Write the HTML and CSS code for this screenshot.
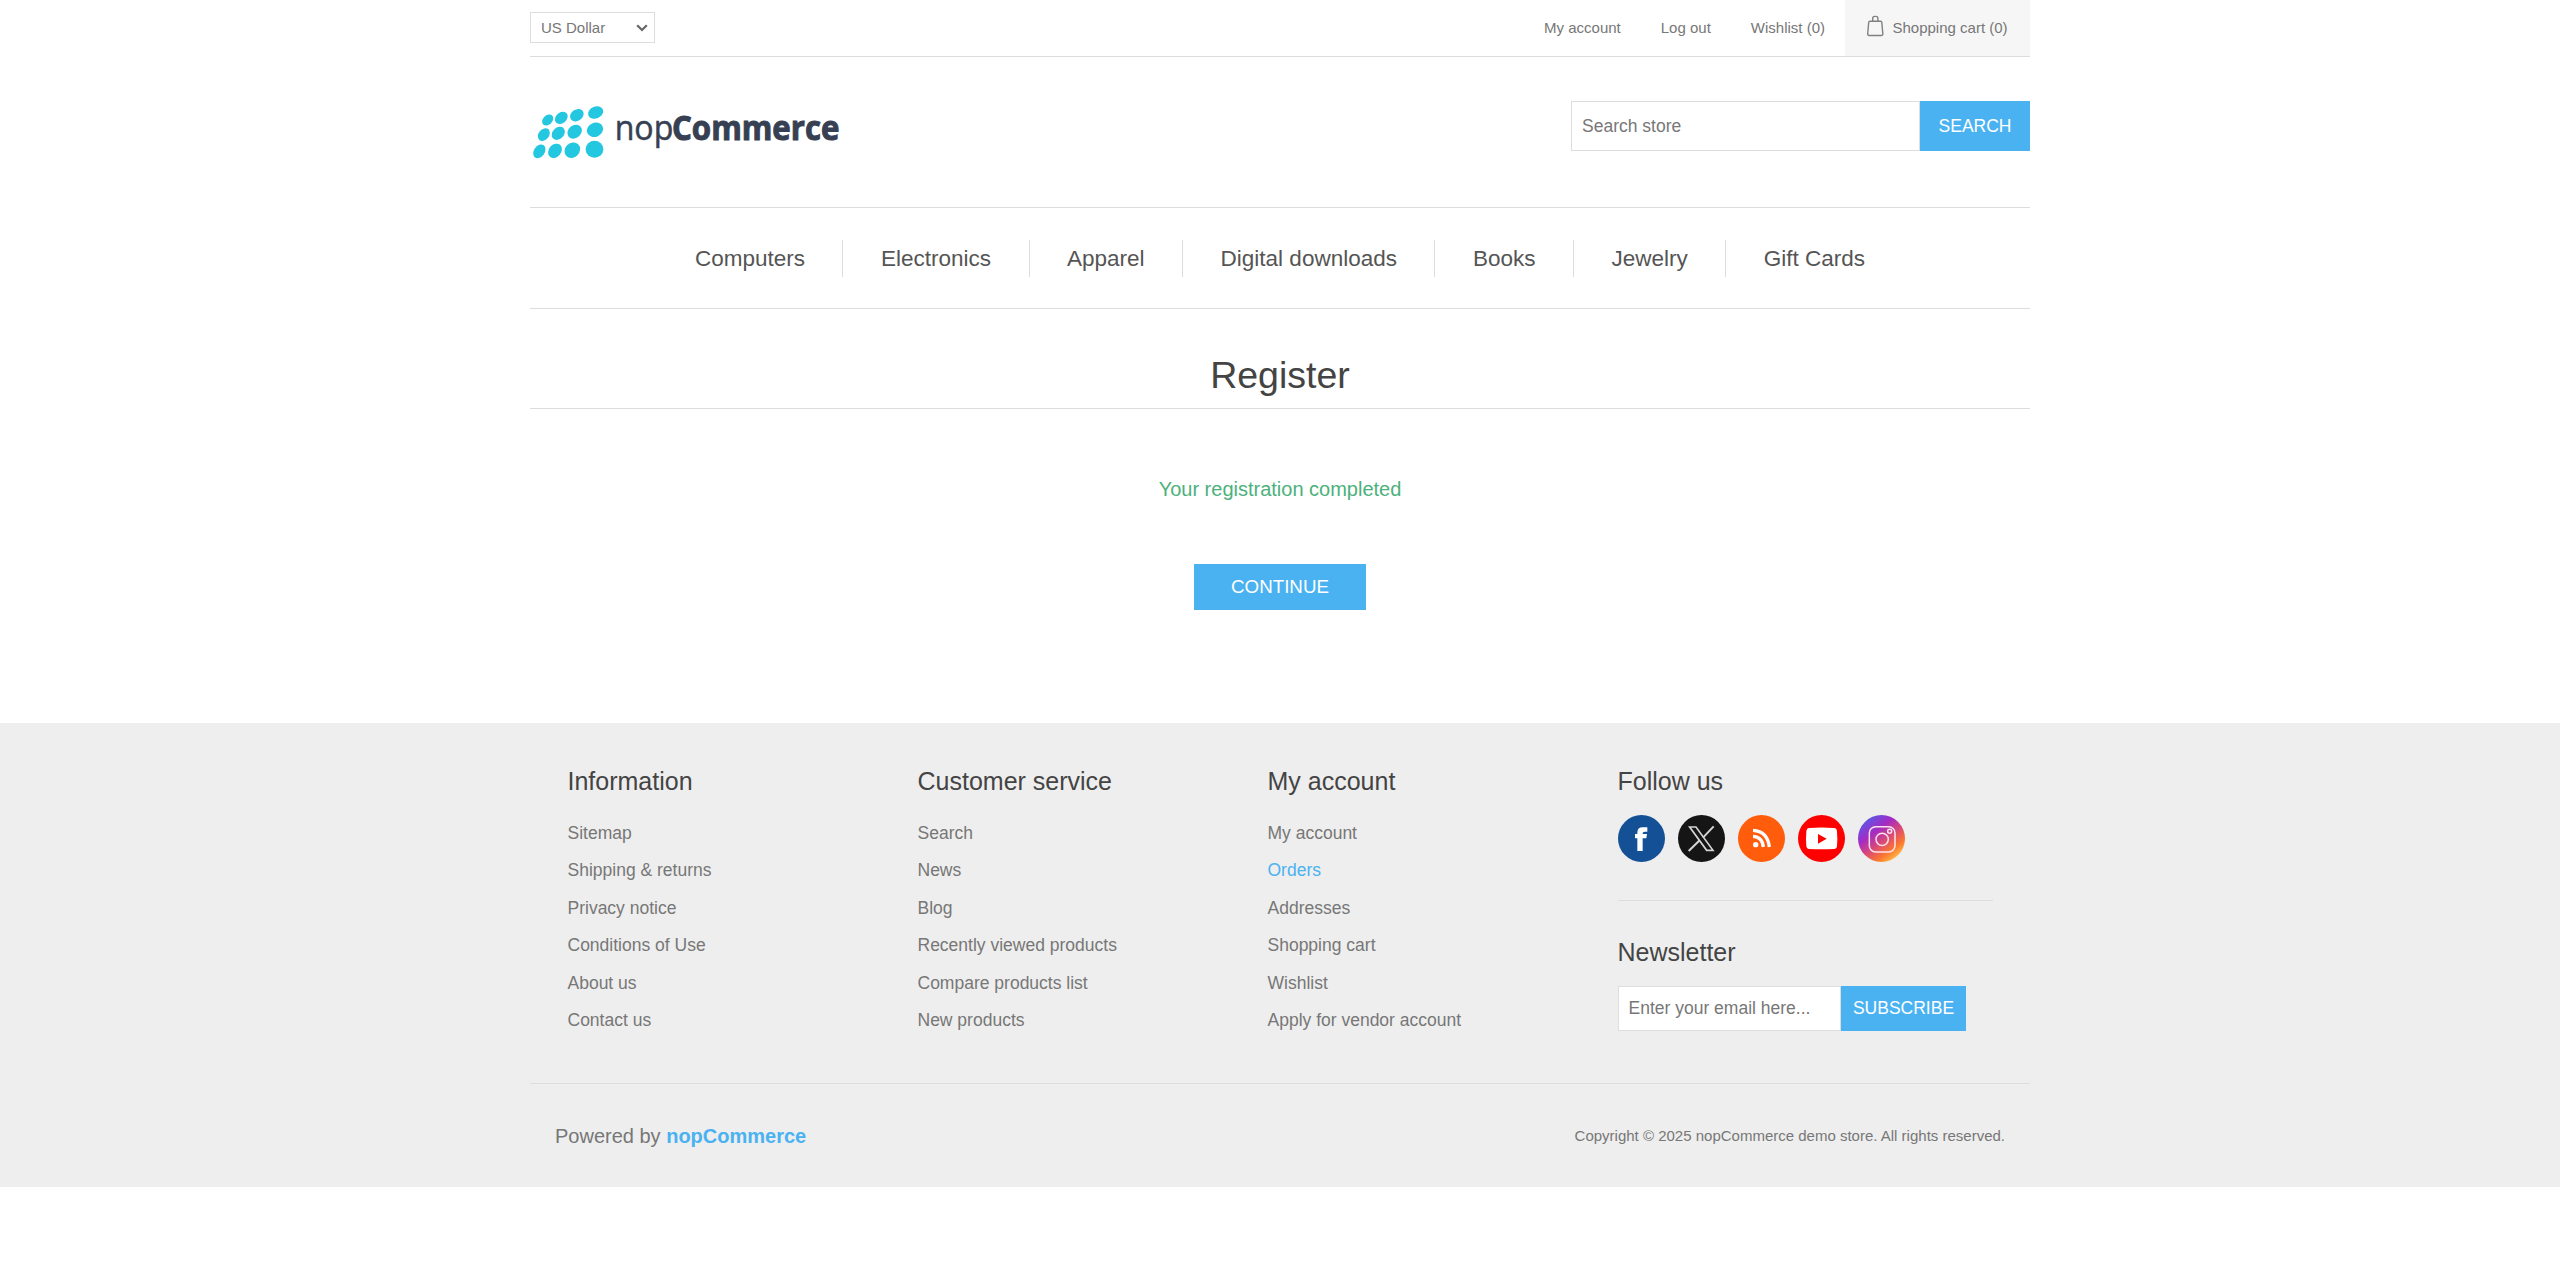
FILE: index.html
```html
<!DOCTYPE html>
<html lang="en">
<head>
<meta charset="utf-8">
<title>nopCommerce demo store. Register</title>
<link rel="stylesheet" href="styles.css">
</head>
<body>
<header class="wrap">
  <div class="topbar">
    <div class="currency">
      <span>US Dollar</span>
      <svg width="12" height="8" viewBox="0 0 12 8"><path d="M1.2 1.2 6 6 10.8 1.2" fill="none" stroke="#666" stroke-width="2.2"/></svg>
    </div>
    <nav class="account-links">
      <a href="#">My account</a>
      <a href="#">Log out</a>
      <a href="#">Wishlist (0)</a>
      <a href="#" class="cart">
        <svg width="17" height="22" viewBox="0 0 17 22" fill="none" stroke="#808080" stroke-width="1.4"><path d="M3 6.200h10.500q1.200 0 1.300 1l1 11.600q.1 1.700-1.500 1.700H2.200q-1.600 0-1.500-1.700L1.700 7.200q.1-1 1.300-1z"/><path d="M5.700 6V3.400q0-2 2-2h1.200q2 0 2 2V6"/></svg>
        <span>Shopping cart (0)</span>
      </a>
    </nav>
  </div>
  <div class="header">
    <a href="#" class="logo">
      <svg width="320" height="70" viewBox="30 285 960 210">
        <g fill="#24c7e0">
          <ellipse cx="83" cy="360" rx="19" ry="14" transform="rotate(-45 83 360)"/>
          <ellipse cx="124" cy="353.500" rx="21" ry="16" transform="rotate(-40 124 353.500)"/>
          <ellipse cx="170.500" cy="345.500" rx="22" ry="17" transform="rotate(-35 170.500 345.500)"/>
          <ellipse cx="227" cy="337.500" rx="23.500" ry="18" transform="rotate(-22 227 337.500)"/>
          <ellipse cx="71.500" cy="404" rx="21" ry="15.500" transform="rotate(-50 71.500 404)"/>
          <ellipse cx="115" cy="400" rx="22" ry="17" transform="rotate(-45 115 400)"/>
          <ellipse cx="164" cy="395" rx="23.500" ry="19" transform="rotate(-40 164 395)"/>
          <ellipse cx="225" cy="389.500" rx="25" ry="21" transform="rotate(-25 225 389.500)"/>
          <ellipse cx="58" cy="454" rx="22.500" ry="16" transform="rotate(-55 58 454)"/>
          <ellipse cx="105" cy="452.500" rx="23.500" ry="18.500" transform="rotate(-50 105 452.500)"/>
          <ellipse cx="157" cy="450.500" rx="25" ry="21.500" transform="rotate(-45 157 450.500)"/>
          <ellipse cx="223.500" cy="448" rx="26.500" ry="25.500"/>
        </g>
        <text class="logo-thin" x="284" y="421" textLength="176" lengthAdjust="spacingAndGlyphs">nop</text>
        <text class="logo-bold" x="456" y="421" textLength="502" lengthAdjust="spacingAndGlyphs">Commerce</text>
      </svg>
    </a>
    <form class="search">
      <input type="text" class="field" placeholder="Search store">
      <button type="button" class="btn">SEARCH</button>
    </form>
  </div>
  <nav class="menu">
    <a href="#">Computers</a><a href="#">Electronics</a><a href="#">Apparel</a><a href="#">Digital downloads</a><a href="#">Books</a><a href="#">Jewelry</a><a href="#">Gift Cards</a>
  </nav>
</header>

<main class="wrap">
  <h1>Register</h1>
  <p class="result">Your registration completed</p>
  <button type="button" class="btn continue">CONTINUE</button>
</main>

<footer>
  <div class="wrap">
    <div class="columns">
      <section>
        <h2>Information</h2>
        <ul><li><a href="#">Sitemap</a></li><li><a href="#">Shipping &amp; returns</a></li><li><a href="#">Privacy notice</a></li><li><a href="#">Conditions of Use</a></li><li><a href="#">About us</a></li><li><a href="#">Contact us</a></li></ul>
      </section>
      <section>
        <h2>Customer service</h2>
        <ul><li><a href="#">Search</a></li><li><a href="#">News</a></li><li><a href="#">Blog</a></li><li><a href="#">Recently viewed products</a></li><li><a href="#">Compare products list</a></li><li><a href="#">New products</a></li></ul>
      </section>
      <section>
        <h2>My account</h2>
        <ul><li><a href="#">My account</a></li><li><a href="#" class="active">Orders</a></li><li><a href="#">Addresses</a></li><li><a href="#">Shopping cart</a></li><li><a href="#">Wishlist</a></li><li><a href="#">Apply for vendor account</a></li></ul>
      </section>
      <section>
        <h2>Follow us</h2>
        <div class="social">
          <svg viewBox="0 0 141 141"><circle cx="70.500" cy="70.500" r="70.500" fill="#135095"/><path fill="#fff" d="M58 108V70h-7V57h7v-4q0-16 16-16h14v13h-8q-6 0-6 5v2h13l-2 13H74v38z"/></svg>
          <svg viewBox="0 0 141 141"><circle cx="70.500" cy="70.500" r="70.500" fill="#151515"/><path fill="none" stroke="#d4d4d4" stroke-width="5" d="M35 36h19l51 70H86z"/><path fill="none" stroke="#d4d4d4" stroke-width="6" d="M107 34 75 68M65 76 32 108"/></svg>
          <svg viewBox="0 0 141 141"><circle cx="70.500" cy="70.500" r="70.500" fill="#ff5c0c"/><circle cx="53" cy="89" r="8" fill="#fff"/><path fill="none" stroke="#fff" stroke-width="10" d="M45 64q28 1 31 32M45 46q44 3 49 50"/></svg>
          <svg viewBox="0 0 141 141"><circle cx="70.500" cy="70.500" r="70.500" fill="#f00"/><path fill="#fff" d="M34 39q37-3 74 0 9 1 9 11 2 20 0 42 0 9-9 10-37 2-74 0-9-1-9-10-2-21 0-42 0-10 9-11z"/><path fill="#f00" d="M60 57v29l26-15z"/></svg>
          <svg viewBox="0 0 141 141">
            <defs><linearGradient id="insta" x1=".15" y1=".1" x2=".82" y2=".97"><stop offset="0" stop-color="#5b57e6"/><stop offset=".3" stop-color="#a42bc4"/><stop offset=".52" stop-color="#d5457f"/><stop offset=".77" stop-color="#fb7530"/><stop offset="1" stop-color="#ffc94a"/></linearGradient></defs>
            <circle cx="70.500" cy="70.500" r="70.500" fill="url(#insta)"/><g fill="none" stroke="#fbe3ee" stroke-width="4.500"><rect x="34" y="35" width="77" height="76" rx="19"/><circle cx="72.500" cy="73" r="18.500"/><circle cx="95" cy="49" r="6"/></g></svg>
        </div>
        <div class="newsletter">
          <h2>Newsletter</h2>
          <form>
            <input type="text" class="field" placeholder="Enter your email here...">
            <button type="button" class="btn">SUBSCRIBE</button>
          </form>
        </div>
      </section>
    </div>
    <div class="legal">
      <span class="powered">Powered by <a href="#">nopCommerce</a></span>
      <span class="copyright">Copyright © 2025 nopCommerce demo store. All rights reserved.</span>
    </div>
  </div>
</footer>
</body>
</html>
```
FILE: styles.css
```css
* { box-sizing: border-box; margin: 0; padding: 0; }
body { background: #fff; color: #777; font-family: "Liberation Sans", Arial, sans-serif; font-size: 17.5px; }
a { color: inherit; text-decoration: none; }
ul { list-style: none; }
svg { display: block; }
input, button { font: inherit; border-radius: 0; }
.wrap { width: 1500px; margin: 0 auto; }

.btn { border: 0; background: #4ab2f1; color: #fff; text-align: center; }
.field { border: 1px solid #ddd; background: #fff; padding: 0 10px; color: #777; outline: 0; }
.field::placeholder { color: #777; opacity: 1; }

.topbar { display: flex; justify-content: space-between; height: 57px; border-bottom: 1px solid #ddd; font-size: 15px; line-height: 56px; }
.currency { display: flex; align-items: center; justify-content: space-between; width: 125px; height: 31px; margin-top: 12px; padding: 0 6px 0 10px; border: 1px solid #ddd; line-height: 29px; }
.account-links { display: flex; gap: 40px; }
.cart { display: flex; gap: 9px; width: 185px; margin-left: -20px; padding-left: 21.5px; background: #f6f6f6; }
.cart svg { margin-top: 15px; }

.header { display: flex; justify-content: space-between; height: 151px; border-bottom: 1px solid #ddd; }
.logo { margin-top: 38px; }
.logo svg { overflow: visible; }
.logo text { font-family: "Open Sans", "Noto Sans", sans-serif; font-size: 104px; fill: #364052; stroke: #364052; }
.logo .logo-thin { font-weight: 400; stroke-width: 1.5px; }
.logo .logo-bold { font-weight: 700; stroke-width: 3px; }
.search { display: flex; height: 50px; margin-top: 44px; }
.search .field { width: 349px; }
.search .btn { width: 110px; }

.menu { display: flex; align-items: center; justify-content: center; height: 101px; border-bottom: 1px solid #ddd; color: #555; font-size: 22.5px; line-height: 37px; }
.menu a { padding: 0 37.5px; }
.menu a + a { border-left: 1px solid #ddd; }

main { height: 414px; text-align: center; }
h1 { height: 100px; padding-top: 44px; border-bottom: 1px solid #ddd; color: #444; font-size: 37.5px; font-weight: 400; line-height: 44px; }
.result { margin-top: 68px; color: #4cb17c; font-size: 20px; line-height: 24px; }
.continue { width: 172px; height: 46px; margin-top: 63px; font-size: 18.75px; }

footer { height: 464px; background: #eee; }
.columns { display: grid; grid-template-columns: 350px 350px 350px 375px; height: 361px; padding: 44px 37.5px 0; border-bottom: 1px solid #ddd; }
h2 { color: #444; font-size: 25px; font-weight: 400; line-height: 29px; }
.columns ul { margin-top: 19px; }
.columns li { height: 37.4px; line-height: 37.4px; }
.active, .powered a { color: #4ab2f1; }
.social { display: flex; gap: 13px; margin-top: 19px; }
.social svg { width: 47px; height: 47px; }
.newsletter { margin-top: 38px; padding-top: 37px; border-top: 1px solid #ddd; }
.newsletter form { display: flex; height: 45px; margin-top: 19px; }
.newsletter .field { width: 223.5px; }
.newsletter .btn { width: 125px; }
.legal { display: flex; align-items: center; justify-content: space-between; height: 103px; padding: 2px 25px 0; }
.powered { font-size: 20px; }
.powered a { font-weight: 700; }
.copyright { padding-bottom: 2px; font-size: 15px; }
```
